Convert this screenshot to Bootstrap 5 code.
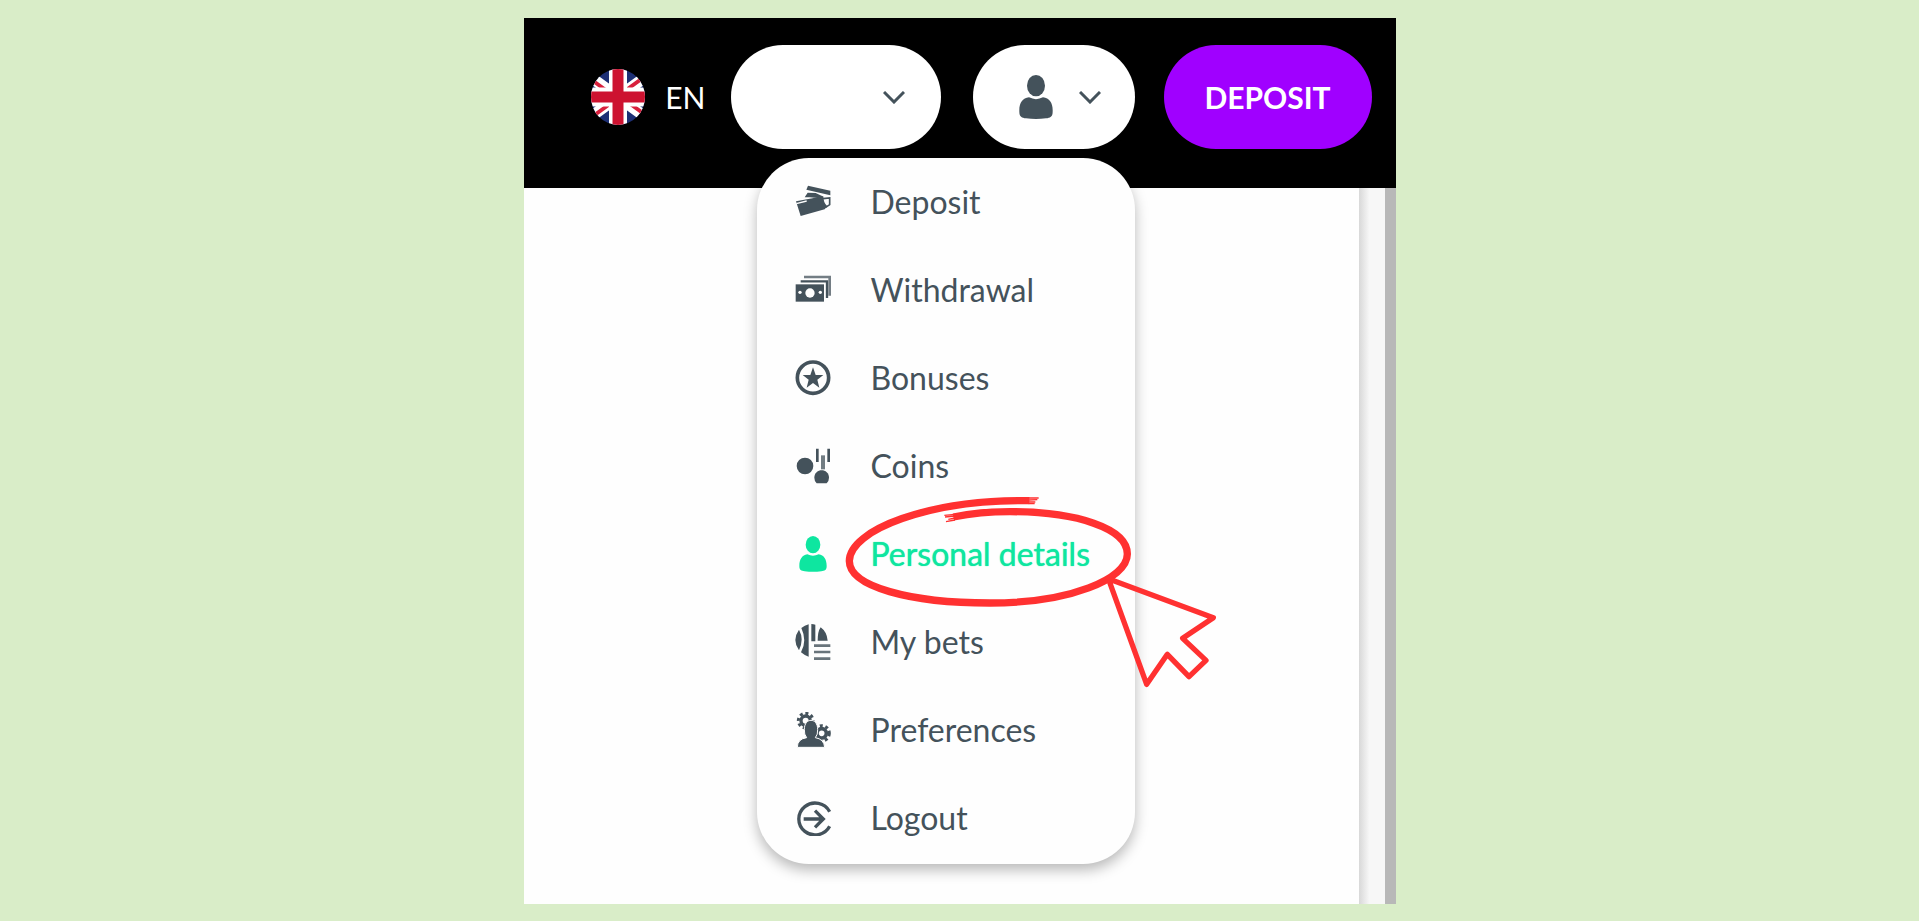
<!DOCTYPE html>
<html lang="en">
<head>
<meta charset="utf-8">
<meta name="viewport" content="width=device-width, initial-scale=1">
<title>Account menu</title>
<link href="https://cdn.jsdelivr.net/npm/bootstrap@5.3.0/dist/css/bootstrap.min.css" rel="stylesheet">
<style>
  body { background: #d9edc8; font-family: Lato, "Liberation Sans", sans-serif; font-size: 32px; line-height: 40px; color: #44525b; }
  .stage { min-height: 100vh; padding: 18px 0 17px; }
  .site { max-width: 872px; background: #fefefe; }
  .site-header { background: #000; padding: 27px 24px 39px; }
  .lang { color: #fff; gap: 20px; margin-right: 25px; font-size: 30px; }
  .pill { height: 104px; background: #fff; border: 0; color: #44525b; }
  .pill-balance { width: 210px; padding-right: 36px; margin-right: 32px; }
  .pill-user { width: 162px; gap: 26px; padding: 0 0 0 12px; }
  .pill-deposit, .pill-deposit:hover { width: 208px; margin-left: 29px; background: #a000ff; color: #fff; font-size: 30px; padding: 0; }
  .account-menu { top: 113px; right: 0; width: 378px; padding: 0 0 2px; margin: 0; border: 0; border-radius: 52px; background: #fefefe; font-size: 32px; color: inherit; box-shadow: 0 6px 14px rgba(0,0,0,.28); }
  .account-menu .dropdown-item { height: 88px; padding: 0 38px; gap: 40px; color: #44525b; background: none; }
  .account-menu .dropdown-item.active { color: #0ee6a0; text-shadow: 0 0 1px #0ee6a0; }
  .gutter { width: 26px; background: linear-gradient(90deg, #d8d8d8, #f7f7f7 40%); }
  .thumb { width: 11px; background: #b8b8b8; }
  .highlight { left: 73px; top: -30px; pointer-events: none; }
</style>
</head>
<body>
<div class="stage d-flex justify-content-center">
  <div class="site w-100 d-flex flex-column">
    <header class="site-header d-flex align-items-center justify-content-end">
      <a href="#" class="lang d-flex align-items-center text-decoration-none">
        <svg width="54" height="56" viewBox="0 0 54 56" aria-hidden="true">
          <clipPath id="disc"><ellipse cx="27" cy="28" rx="27" ry="28"/></clipPath>
          <g clip-path="url(#disc)">
            <path fill="#1d2f74" d="M0 0h54v56H0z"/>
            <path stroke="#fff" stroke-width="11" d="M-6 4 60 52M60 4-6 52"/>
            <path stroke="#d8203c" stroke-width="4" d="M-6 6 27 30M60 3 27 27M-6 53 27 29M60 50 27 26"/>
            <path stroke="#fff" stroke-width="18" d="M27 0v56"/>
            <path stroke="#fff" stroke-width="19" d="M0 28h54"/>
            <path stroke="#cd1230" stroke-width="11" d="M27 0v56M0 28h54"/>
          </g>
        </svg>
        <span>EN</span>
      </a>
      <button type="button" class="pill pill-balance rounded-pill d-flex align-items-center justify-content-end" aria-label="Balance">
        <svg width="22" height="13" viewBox="0 0 22 13" fill="none" stroke="currentColor" stroke-width="3"><path d="m1 1 10 10L21 1"/></svg>
      </button>
      <div class="position-relative">
        <button type="button" class="pill pill-user rounded-pill d-flex align-items-center justify-content-center" aria-label="Account" aria-expanded="true">
          <svg width="34" height="44" viewBox="0 0 102 132" fill="currentColor"><ellipse cx="51" cy="32" rx="27" ry="32"/><path d="M1 110C0 84 10 70 30 67q21 11 42 0c20 3 30 17 29 43 0 16-8 18-20 20q-30 4-60 0C9 128 1 126 1 110z"/></svg>
          <svg width="22" height="13" viewBox="0 0 22 13" fill="none" stroke="currentColor" stroke-width="3"><path d="m1 1 10 10L21 1"/></svg>
        </button>
        <div class="account-menu dropdown-menu show">
          <a class="dropdown-item d-flex align-items-center" href="#">
            <svg width="36" height="36" viewBox="0 0 108 108" fill="currentColor"><path d="m39 5 67 15v14L34 17zM29 40l9-14 24 1 24 11-12 5-30-3zM3 52l82-15q0 20 12 30l-8 9-72 20z"/><path stroke="#fefefe" stroke-width="4" d="m4 59 31-8"/><path fill="none" stroke="currentColor" stroke-width="5" d="m84 44 20-2v20l-12 8"/></svg>
            <span>Deposit</span></a>
          <a class="dropdown-item d-flex align-items-center" href="#">
            <svg width="36" height="36" viewBox="0 0 108 108" fill="currentColor"><path d="M2 37h85v52H2z"/><path fill="none" stroke="currentColor" stroke-width="7" d="M17 28h79v50"/><path fill="none" stroke="currentColor" stroke-width="8" opacity=".75" d="M27 15h77v56"/><g fill="#fefefe"><circle cx="45" cy="63" r="14"/><circle cx="15" cy="61" r="5"/><circle cx="76" cy="61" r="5"/></g></svg>
            <span>Withdrawal</span></a>
          <a class="dropdown-item d-flex align-items-center" href="#">
            <svg width="36" height="36" viewBox="0 0 108 108" fill="currentColor"><circle cx="54" cy="53" r="47" fill="none" stroke="currentColor" stroke-width="11"/><path d="m54 22 8 23h23L67 59l6 24-19-14-19 14 6-24-18-14h23z"/></svg>
            <span>Bonuses</span></a>
          <a class="dropdown-item d-flex align-items-center" href="#">
            <svg width="36" height="36" viewBox="0 0 108 108" fill="currentColor"><circle cx="30" cy="54" r="25"/><path d="M58 89c0-30 44-30 44 0q0 10-7 17H65q-7-7-7-17z"/><path stroke="currentColor" stroke-width="8" d="M67 2v40M101 2v40"/><path stroke="currentColor" stroke-width="12" opacity=".75" d="M84 22v42"/></svg>
            <span>Coins</span></a>
          <a class="dropdown-item active d-flex align-items-center position-relative" href="#" aria-current="page">
            <svg width="36" height="36" viewBox="0 0 108 108" fill="currentColor"><ellipse cx="54" cy="26" rx="22" ry="26"/><path d="M13 90c0-20 8-32 24-35q17 8 34 0c16 3 24 15 24 35 0 13-6 14-16 16q-25 3-50 0c-10-2-16-3-16-16z"/></svg>
            <span>Personal details</span>
            <svg class="highlight position-absolute" width="400" height="220" viewBox="0 0 1200 660" fill="none" stroke="#ff3131" aria-hidden="true">
              <path stroke-width="22" d="M598 62C300 57 58 150 58 243 58 320 240 369 480 369S892 297 892 222C892 145 740 95 540 95Q450 95 370 111"/>
              <path stroke-width="4" d="M596 54h30M596 60l26-1M596 66l20 0M596 71h18M375 103l-32 3M375 108l-30 3M375 114l-20 4M375 120l-27 5"/>
              <path stroke-width="16" stroke-linejoin="round" d="m835 296 315 117-92 62 70 66-51 49-65-67-62 90z"/>
            </svg></a>
          <a class="dropdown-item d-flex align-items-center" href="#">
            <svg width="36" height="36" viewBox="0 0 108 108" fill="currentColor"><path d="M12 17q16 28 0 62Q-10 48 12 17zM19 12q10-8 22-11v97q-13-4-23-13 19-34 1-73zM49 0q7 0 12 2v50H49zM68 50q0-28 9-40 19 14 21 40z"/><path stroke="currentColor" stroke-width="8" d="M57 65h49M57 84h49M57 104h49" opacity=".8"/></svg>
            <span>My bets</span></a>
          <a class="dropdown-item d-flex align-items-center" href="#">
            <svg width="36" height="36" viewBox="0 0 108 108" fill="currentColor"><g fill="none" stroke="currentColor"><circle cx="32" cy="26" r="14" stroke-width="10"/><circle cx="32" cy="26" r="22" stroke-width="9" stroke-dasharray="9 8"/><circle cx="80" cy="64" r="14" stroke-width="11"/><circle cx="80" cy="64" r="23" stroke-width="9" stroke-dasharray="9 8"/></g><path stroke="#fefefe" stroke-width="3" d="M7 106q0-25 28-29-8-9-7-25c0-36 40-36 40 0q1 16-7 25 26 4 28 29z"/></svg>
            <span>Preferences</span></a>
          <a class="dropdown-item d-flex align-items-center" href="#">
            <svg width="36" height="36" viewBox="0 0 108 108" fill="none" stroke="currentColor" stroke-width="10"><path d="M104 35A49 48 0 1 0 104 79"/><path d="M26 57h58M60 32l25 25-25 25"/></svg>
            <span>Logout</span></a>
        </div>
      </div>
      <button type="button" class="pill-deposit pill btn rounded-pill fw-bold">DEPOSIT</button>
    </header>
    <main class="flex-grow-1 d-flex justify-content-end">
      <div class="gutter"></div>
      <div class="thumb"></div>
    </main>
  </div>
</div>
<script src="https://cdn.jsdelivr.net/npm/bootstrap@5.3.0/dist/js/bootstrap.bundle.min.js"></script>
</body>
</html>
